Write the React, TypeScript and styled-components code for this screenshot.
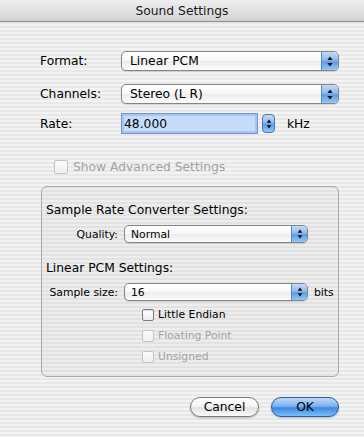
import styled, { createGlobalStyle } from 'styled-components';

const GlobalStyle = createGlobalStyle`
  html, body {
    margin: 0;
    padding: 0;
  }
  body {
    font-family: "DejaVu Sans", "Lucida Grande", sans-serif;
    font-size: 12.3px;
    color: #000;
  }
`;

const Window = styled.div`
  width: 364px;
  height: 437px;
  display: flex;
  flex-direction: column;
  overflow: hidden;
  background: repeating-linear-gradient(180deg, #f3f3f3 0 2px, #e8e8e8 2px 4px);
`;

const TitleBar = styled.div`
  height: 21px;
  flex-shrink: 0;
  display: flex;
  align-items: center;
  justify-content: center;
  border-bottom: 1px solid #8a8a8a;
  background: linear-gradient(180deg, #eeeeee 0%, #e2e2e2 50%, #d2d2d2 100%);
  color: #1a1a1a;
  font-size: 12.3px;
`;

const Content = styled.div`
  flex: 1;
  display: flex;
  flex-direction: column;
  padding: 29px 25px 0 40px;
`;

const Row = styled.div<{ $top: number; $h: number; $indent?: number }>`
  display: flex;
  align-items: center;
  margin-top: ${(p) => p.$top}px;
  margin-left: ${(p) => p.$indent ?? 0}px;
  height: ${(p) => p.$h}px;
`;

const Label = styled.span<{ $w: number; $right?: boolean; $small?: boolean }>`
  width: ${(p) => p.$w}px;
  flex-shrink: 0;
  text-align: ${(p) => (p.$right ? 'right' : 'left')};
  padding-right: ${(p) => (p.$right ? 6 : 0)}px;
  box-sizing: border-box;
  font-size: ${(p) => (p.$small ? '10.8px' : '12.3px')};
`;

const PopupBox = styled.div<{ $w: number; $h: number; $small?: boolean }>`
  width: ${(p) => p.$w}px;
  height: ${(p) => p.$h}px;
  box-sizing: border-box;
  display: flex;
  border: 1px solid #858585;
  border-radius: 5px;
  overflow: hidden;
  background: linear-gradient(180deg, #ffffff 0%, #f7f7f7 50%, #ececec 51%, #fbfbfb 100%);
  box-shadow: 0 1px 1px rgba(0, 0, 0, 0.12);
  font-size: ${(p) => (p.$small ? '10.8px' : '12.3px')};
`;

const PopupText = styled.span<{ $small?: boolean }>`
  flex: 1;
  display: flex;
  align-items: center;
  padding-left: ${(p) => (p.$small ? 6 : 8)}px;
`;

const AquaArrows = styled.span<{ $w: number }>`
  width: ${(p) => p.$w}px;
  flex-shrink: 0;
  display: flex;
  align-items: center;
  justify-content: center;
  border-left: 1px solid #5d87c2;
  background: linear-gradient(180deg, #c3dbf7 0%, #8fbaee 45%, #5e9be6 55%, #92c8f8 100%);
`;

const StepperBox = styled.span`
  width: 13px;
  height: 19px;
  margin-left: 4px;
  display: flex;
  align-items: center;
  justify-content: center;
  box-sizing: border-box;
  border: 1px solid #4d77b3;
  border-radius: 4px;
  background: linear-gradient(180deg, #c3dbf7 0%, #8fbaee 45%, #5e9be6 55%, #92c8f8 100%);
`;

const Field = styled.div`
  width: 137px;
  height: 21px;
  box-sizing: border-box;
  display: flex;
  align-items: center;
  padding-left: 2px;
  border: 1px solid #6a97d6;
  box-shadow: inset 0 0 0 2px #a6c6ef;
  background: #c6dcf8;
`;

const Unit = styled.span<{ $gap: number; $small?: boolean }>`
  margin-left: ${(p) => p.$gap}px;
  font-size: ${(p) => (p.$small ? '10.8px' : '12.3px')};
`;

const Box = styled.span<{ $size: number; $disabled?: boolean }>`
  width: ${(p) => p.$size}px;
  height: ${(p) => p.$size}px;
  box-sizing: border-box;
  flex-shrink: 0;
  border: 1px solid ${(p) => (p.$disabled ? '#c4c4c4' : '#7d7d7d')};
  border-radius: 2px;
  background: ${(p) =>
    p.$disabled
      ? 'linear-gradient(180deg, #fafafa 0%, #efefef 100%)'
      : 'linear-gradient(180deg, #ffffff 0%, #ededed 100%)'};
  box-shadow: ${(p) => (p.$disabled ? 'none' : 'inset 0 1px 1px rgba(0,0,0,0.15)')};
`;

const BoxText = styled.span<{ $gap: number; $disabled?: boolean; $small?: boolean }>`
  margin-left: ${(p) => p.$gap}px;
  color: ${(p) => (p.$disabled ? '#a2a2a2' : '#000')};
  font-size: ${(p) => (p.$small ? '10.8px' : '12.3px')};
`;

const Group = styled.div`
  margin-top: 12px;
  margin-left: 1px;
  width: 298px;
  height: 191px;
  box-sizing: border-box;
  display: flex;
  flex-direction: column;
  padding-top: 15px;
  border: 1px solid #a9a9a9;
  border-radius: 6px;
  background: rgba(0, 0, 0, 0.025);
`;

const Heading = styled.div<{ $top: number }>`
  height: 16px;
  line-height: 16px;
  margin-top: ${(p) => p.$top}px;
  margin-left: 4px;
`;

const ButtonRow = styled.div`
  margin-top: 20px;
  display: flex;
  justify-content: flex-end;
  gap: 12px;
`;

const Button = styled.button<{ $primary?: boolean; $w: number }>`
  width: ${(p) => p.$w}px;
  height: 20px;
  padding: 0;
  font-family: inherit;
  font-size: 12.3px;
  color: #000;
  border-radius: 10px;
  border: 1px solid ${(p) => (p.$primary ? '#2e5b9e' : '#7c7c7c')};
  background: ${(p) =>
    p.$primary
      ? 'linear-gradient(180deg, #bcd8f8 0%, #7fb2ee 45%, #3f87e6 55%, #77c0fa 100%)'
      : 'linear-gradient(180deg, #ffffff 0%, #f4f4f4 45%, #e2e2e2 55%, #fbfbfb 100%)'};
  box-shadow: 0 1px 2px rgba(0, 0, 0, 0.25);
`;

const UpDown = ({ small }: { small?: boolean }) => (
  <svg width="6" height={small ? 10 : 11} viewBox="0 0 6 11">
    <path d="M3 0.5 L5.6 4 L0.4 4 Z" fill="#111" />
    <path d="M3 10.5 L5.6 7 L0.4 7 Z" fill="#111" />
  </svg>
);

interface PopupProps {
  value: string;
  width: number;
  small?: boolean;
}

const Popup = ({ value, width, small }: PopupProps) => (
  <PopupBox $w={width} $h={small ? 18 : 20} $small={small}>
    <PopupText $small={small}>{value}</PopupText>
    <AquaArrows $w={small ? 15 : 16}>
      <UpDown small={small} />
    </AquaArrows>
  </PopupBox>
);

interface CheckProps {
  label: string;
  disabled?: boolean;
}

const SmallCheck = ({ label, disabled }: CheckProps) => (
  <Row $top={0} $h={21} $indent={100}>
    <Box $size={12} $disabled={disabled} />
    <BoxText $gap={4} $small $disabled={disabled}>
      {label}
    </BoxText>
  </Row>
);

const App = () => {
  return (
    <>
      <GlobalStyle />
      <Window>
        <TitleBar>Sound Settings</TitleBar>
        <Content>
          <Row $top={0} $h={20}>
            <Label $w={81}>Format:</Label>
            <Popup value="Linear PCM" width={219} />
          </Row>
          <Row $top={13} $h={20}>
            <Label $w={81}>Channels:</Label>
            <Popup value="Stereo (L R)" width={219} />
          </Row>
          <Row $top={9} $h={21}>
            <Label $w={81}>Rate:</Label>
            <Field>48.000</Field>
            <StepperBox>
              <UpDown small />
            </StepperBox>
            <Unit $gap={12}>kHz</Unit>
          </Row>
          <Row $top={26} $h={14} $indent={14}>
            <Box $size={14} $disabled />
            <BoxText $gap={5} $disabled>
              Show Advanced Settings
            </BoxText>
          </Row>

          <Group>
            <Heading $top={0}>Sample Rate Converter Settings:</Heading>
            <Row $top={7} $h={18}>
              <Label $w={82} $right $small>
                Quality:
              </Label>
              <Popup value="Normal" width={184} small />
            </Row>
            <Heading $top={17}>Linear PCM Settings:</Heading>
            <Row $top={7} $h={18} style={{ marginBottom: 3 }}>
              <Label $w={82} $right $small>
                Sample size:
              </Label>
              <Popup value="16" width={184} small />
              <Unit $gap={6} $small>
                bits
              </Unit>
            </Row>
            <SmallCheck label="Little Endian" />
            <SmallCheck label="Floating Point" disabled />
            <SmallCheck label="Unsigned" disabled />
          </Group>

          <ButtonRow>
            <Button $w={69}>Cancel</Button>
            <Button $w={68} $primary>
              OK
            </Button>
          </ButtonRow>
        </Content>
      </Window>
    </>
  );
};

export default App;
